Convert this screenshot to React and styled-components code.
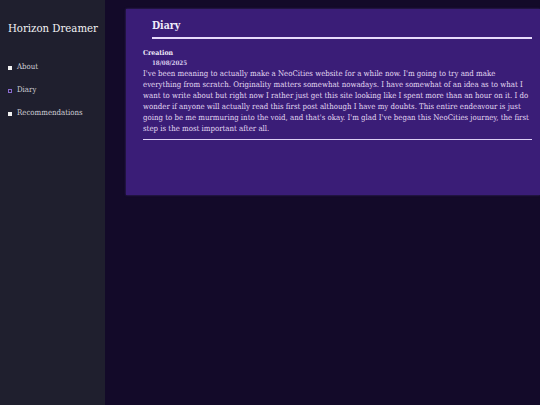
import React from "react";
import styled, { createGlobalStyle } from "styled-components";

const GlobalStyle = createGlobalStyle`
  html, body { margin: 0; padding: 0; background: #130a29; }
  body {
    font-family: "DejaVu Serif", "Liberation Serif", serif;
    font-stretch: condensed;
    color: #e4dbf3;
  }
  * { box-sizing: border-box; }
`;

const Layout = styled.div`
  display: grid;
  grid-template-columns: 105px 1fr;
  min-height: 100vh;
  overflow: hidden;
`;

const Sidebar = styled.aside`
  background: #1f1f2e;
  padding: 22px 0 0 8px;
`;

const SiteTitle = styled.h1`
  margin: 0;
  font-size: 11.3px;
  line-height: 14px;
  font-weight: normal;
  color: #f2f2f4;
  white-space: nowrap;
`;

const NavList = styled.ul`
  list-style: none;
  margin: 26px 0 0;
  padding: 0;
  display: flex;
  flex-direction: column;
  gap: 13px;
`;

const NavItem = styled.li`
  display: flex;
  align-items: center;
  gap: 5px;
  font-size: 7.8px;
  line-height: 10px;
  color: #cfcfd6;
  white-space: nowrap;
`;

const Bullet = styled.span`
  flex: none;
  width: 4px;
  height: 4px;
  margin-top: 1px;
  background: ${(p) => (p.$active ? "#1f1f2e" : "#f0f0f0")};
  border: ${(p) => (p.$active ? "1px solid #8a6bd0" : "none")};
`;

const Main = styled.main`
  padding: 9px 0 0 21px;
`;

const Panel = styled.section`
  height: 186px;
  background: #3a1d77;
  padding: 10px 8px 0 17px;
  box-shadow: 0 0 2px rgba(110, 80, 190, 0.5);
`;

const Heading = styled.h2`
  margin: 0 0 0 9px;
  padding-bottom: 6px;
  border-bottom: 2px solid #e6dbfb;
  font-size: 10.4px;
  line-height: 12px;
  font-weight: bold;
  color: #f1ecfa;
`;

const Entry = styled.article`
  margin-top: 10px;
`;

const EntryTitle = styled.h3`
  margin: 0;
  font-size: 6.9px;
  line-height: 9px;
  font-weight: bold;
  color: #efe9f8;
`;

const EntryDate = styled.div`
  margin-left: 9px;
  font-size: 6.2px;
  line-height: 9px;
  font-weight: bold;
  color: #d9cfee;
`;

const EntryBody = styled.p`
  margin: 2.4px 0 0;
  font-size: 7.8px;
  line-height: 10.9px;
  color: #e2d9f2;
`;

const Rule = styled.hr`
  margin: 4.4px 0 0;
  border: none;
  border-top: 1px solid #ddd0f5;
`;

const navItems = [
  { label: "About" },
  { label: "Diary", active: true },
  { label: "Recommendations" },
];

const bodyLines = [
  "I've been meaning to actually make a NeoCities website for a while now. I'm going to try and make",
  "everything from scratch. Originality matters somewhat nowadays. I have somewhat of an idea as to what I",
  "want to write about but right now I rather just get this site looking like I spent more than an hour on it. I do",
  "wonder if anyone will actually read this first post although I have my doubts. This entire endeavour is just",
  "going to be me murmuring into the void, and that's okay. I'm glad I've began this NeoCities journey, the first",
  "step is the most important after all.",
];

export default function App() {
  return (
    <>
      <GlobalStyle />
      <Layout>
        <Sidebar>
          <SiteTitle>Horizon Dreamer</SiteTitle>
          <NavList>
            {navItems.map((item) => (
              <NavItem key={item.label}>
                <Bullet $active={item.active} />
                {item.label}
              </NavItem>
            ))}
          </NavList>
        </Sidebar>
        <Main>
          <Panel>
            <Heading>Diary</Heading>
            <Entry>
              <EntryTitle>Creation</EntryTitle>
              <EntryDate>18/08/2025</EntryDate>
              <EntryBody>
                {bodyLines.map((line, i) => (
                  <React.Fragment key={i}>
                    {line}
                    {i < bodyLines.length - 1 && <br />}
                  </React.Fragment>
                ))}
              </EntryBody>
              <Rule />
            </Entry>
          </Panel>
        </Main>
      </Layout>
    </>
  );
}
